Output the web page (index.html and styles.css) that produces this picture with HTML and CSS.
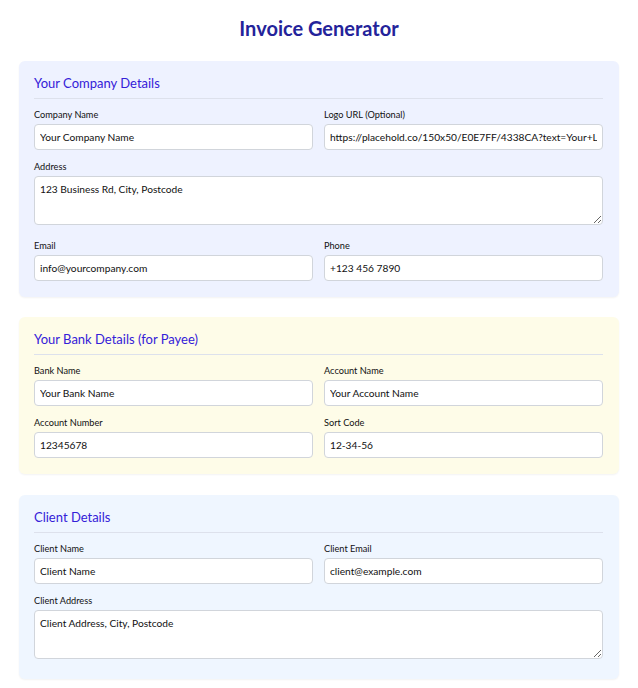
FILE: index.html
```html
<!DOCTYPE html>
<html lang="en">
<head>
<meta charset="utf-8">
<title>Invoice Generator</title>
<link rel="stylesheet" href="styles.css">
</head>
<body>
<div class="container">
  <h1 class="title">Invoice Generator</h1>

  <section class="card card-company">
    <h2 class="card-title">Your Company Details</h2>
    <div class="grid">
      <div class="field">
        <label class="label">Company Name</label>
        <input class="input" type="text" value="Your Company Name">
      </div>
      <div class="field">
        <label class="label">Logo URL (Optional)</label>
        <input class="input" type="text" value="https://placehold.co/150x50/E0E7FF/4338CA?text=Your+Logo">
      </div>
      <div class="field full">
        <label class="label">Address</label>
        <textarea class="input textarea">123 Business Rd, City, Postcode</textarea>
      </div>
      <div class="field">
        <label class="label">Email</label>
        <input class="input" type="text" value="info@yourcompany.com">
      </div>
      <div class="field">
        <label class="label">Phone</label>
        <input class="input" type="text" value="+123 456 7890">
      </div>
    </div>
  </section>

  <section class="card card-bank">
    <h2 class="card-title">Your Bank Details (for Payee)</h2>
    <div class="grid">
      <div class="field">
        <label class="label">Bank Name</label>
        <input class="input" type="text" value="Your Bank Name">
      </div>
      <div class="field">
        <label class="label">Account Name</label>
        <input class="input" type="text" value="Your Account Name">
      </div>
      <div class="field">
        <label class="label">Account Number</label>
        <input class="input" type="text" value="12345678">
      </div>
      <div class="field">
        <label class="label">Sort Code</label>
        <input class="input" type="text" value="12-34-56">
      </div>
    </div>
  </section>

  <section class="card card-client">
    <h2 class="card-title">Client Details</h2>
    <div class="grid">
      <div class="field">
        <label class="label">Client Name</label>
        <input class="input" type="text" value="Client Name">
      </div>
      <div class="field">
        <label class="label">Client Email</label>
        <input class="input" type="text" value="client@example.com">
      </div>
      <div class="field full">
        <label class="label">Client Address</label>
        <textarea class="input textarea">Client Address, City, Postcode</textarea>
      </div>
    </div>
  </section>
</div>
</body>
</html>
```

FILE: styles.css
```css
* { box-sizing: border-box; }

body {
  margin: 0;
  background: #ffffff;
  font-family: "Lato", "Noto Sans", sans-serif;
  color: #111111;
}

.container {
  width: 600px;
  margin: 0 auto;
  padding-top: 16px;
}

.title {
  margin: 0 0 21px;
  font-size: 20px;
  line-height: 24px;
  font-weight: 700;
  text-align: center;
  color: #24239a;
}

.card {
  border-radius: 6px;
  padding: 12px 16px 16px 15px;
  margin-bottom: 20px;
  box-shadow: 0 1px 2px rgba(0, 0, 0, 0.05);
}

.card-company { background: #eef2ff; }
.card-bank { background: #fefce8; margin-bottom: 21px; }
.card-client { background: #eff6ff; }

.card-title {
  margin: 0 0 9px;
  padding-bottom: 5px;
  border-bottom: 1px solid #dde1ec;
  font-size: 13px;
  line-height: 20px;
  font-weight: 400;
  color: #3420d8;
}

.grid {
  display: grid;
  grid-template-columns: 1fr 1fr;
  column-gap: 11px;
  row-gap: 10px;
}

.field {
  display: flex;
  flex-direction: column;
}

.full { grid-column: 1 / -1; }

.label {
  font-size: 9.2px;
  line-height: 13px;
  margin-bottom: 3px;
  color: #111111;
}

.input {
  display: block;
  width: 100%;
  height: 26px;
  padding: 0 5px;
  border: 1px solid #d1d5db;
  border-radius: 4px;
  background: #ffffff;
  font-family: inherit;
  font-size: 10.2px;
  color: #111111;
  outline: none;
}

.textarea {
  height: 49px;
  padding: 5px 5px;
  line-height: 14px;
  resize: vertical;
  margin-bottom: 4px;
}
```
